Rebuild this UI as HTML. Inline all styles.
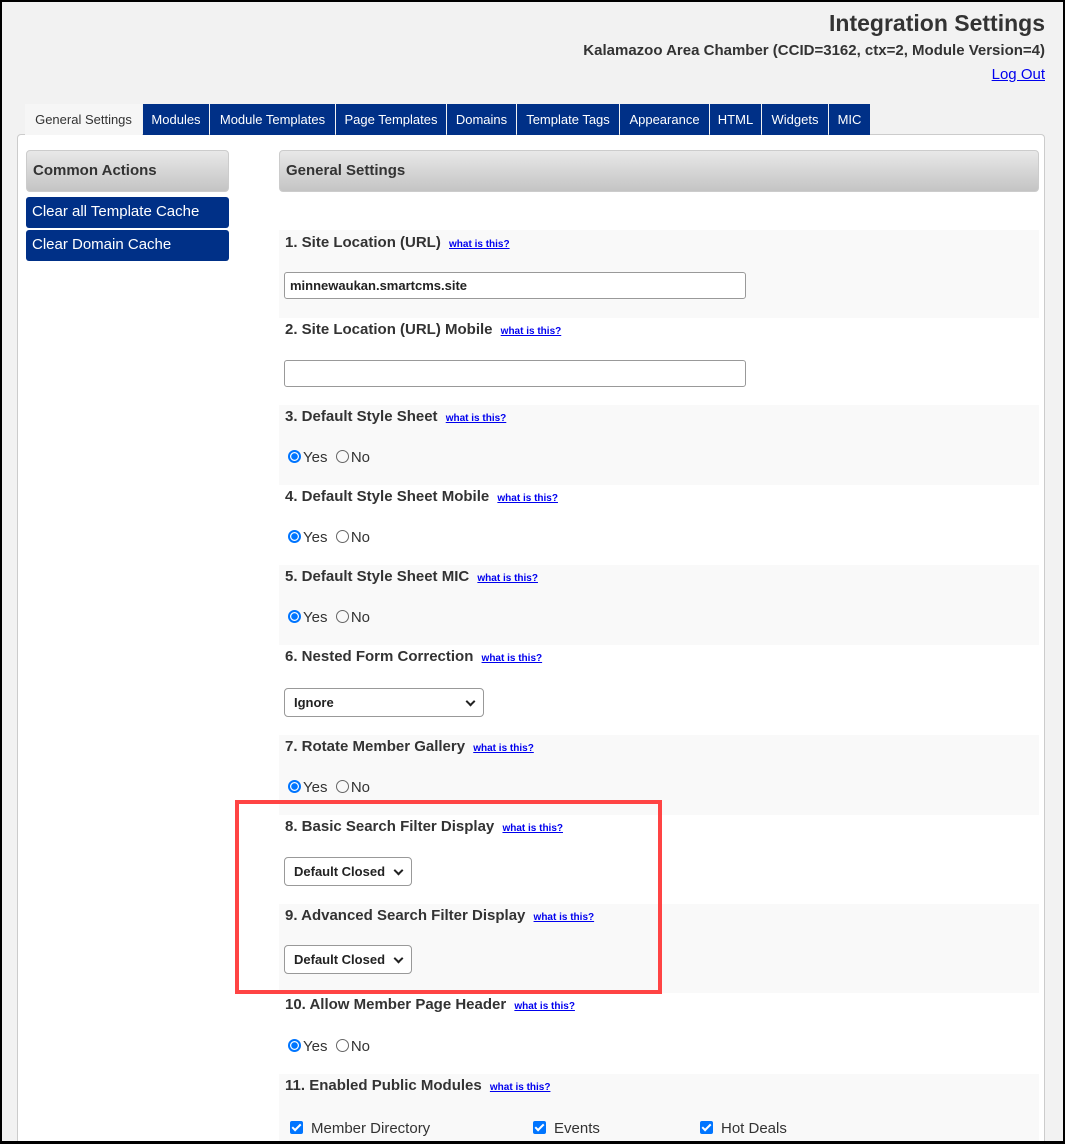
<!DOCTYPE html>
<html style="width:1065px;height:1144px;overflow:hidden"><head><style>
*{box-sizing:border-box;margin:0;padding:0}
body{width:1065px;height:1144px;background:#f2f2f2;font-family:"Liberation Sans","DejaVu Sans",sans-serif;position:relative;overflow:hidden;color:#333}
.frame{position:absolute;left:0;top:0;width:1065px;height:1144px;border:2px solid #000;border-bottom-width:3px;z-index:5;pointer-events:none}
.a{position:absolute;white-space:nowrap}
h1{position:absolute;right:20px;top:10px;font-size:23px;font-weight:bold;color:#333}
.sub{right:20px;top:42px;font-size:15px;font-weight:bold;color:#333}
.lo{right:20px;top:66px;font-size:15px;color:#00e;text-decoration:underline}
.tab{position:absolute;top:104px;background:#003087;color:#fff;font-size:13px;height:31px;line-height:31px;text-align:center;white-space:nowrap}
.tab.on{background:#f6f6f6;color:#333}
.panel{position:absolute;left:17px;top:134px;width:1028px;height:1008px;background:#fff;border:1px solid #ccc;border-bottom:none;border-radius:4px 4px 0 0}
.hd{position:absolute;height:42px;line-height:40px;background:linear-gradient(#e8e8e8,#c4c4c4);border:1px solid #ccc;border-radius:4px;font-weight:bold;font-size:15px;padding-left:6px;color:#333}
.btn{position:absolute;left:26px;width:203px;height:31px;background:#003087;color:#fff;font-size:15px;line-height:30px;padding-left:6px;border-radius:3px}
.row{position:absolute;left:279px;width:760px}
.sh{background:#f9f9f9}
.lb{position:absolute;left:6px;font-size:15px;font-weight:bold;color:#333;white-space:nowrap}
.lb a{font-size:10px;color:#00e;text-decoration:underline;font-weight:bold;margin-left:4px}
.inp{position:absolute;left:5px;width:462px;height:27px;border:1px solid #999;border-radius:3px;font-size:13px;font-weight:bold;padding:5px;color:#222;background:#fff}
.sel{position:absolute;left:5px;height:29px;border:1px solid #999;border-radius:4px;font-size:13px;font-weight:bold;padding:6px 9px;color:#222;background:#fff}
.sel:after{content:"";position:absolute;right:9px;top:9px;width:5px;height:5px;border-right:2px solid #222;border-bottom:2px solid #222;transform:rotate(45deg)}
.rad{position:absolute;left:9px;font-size:15px;color:#333;white-space:nowrap}
.rb{display:inline-block;width:13px;height:13px;border-radius:50%;border:1px solid #666;vertical-align:-1px;margin-right:2px}
.rb.on{border:2px solid #0075ff;background:radial-gradient(#0075ff 3px,#fff 3.5px)}
.cb{display:inline-block;width:13px;height:13px;background:#0075ff;border-radius:2px;vertical-align:-1px;position:relative;margin-right:8px}
.cb:after{content:"";position:absolute;left:4px;top:1px;width:3px;height:7px;border-right:2px solid #fff;border-bottom:2px solid #fff;transform:rotate(45deg)}
.red{position:absolute;left:235px;top:800px;width:427px;height:194px;border:4px solid #f44;z-index:4}
</style></head><body>
<div class="frame"></div>
<h1>Integration Settings</h1>
<div class="a sub">Kalamazoo Area Chamber (CCID=3162, ctx=2, Module Version=4)</div>
<div class="a lo">Log Out</div>
<div class="panel"></div>
<div class="tab on" style="left:25px;width:117px">General Settings</div>
<div class="tab" style="left:143px;width:66px">Modules</div>
<div class="tab" style="left:210px;width:125px">Module Templates</div>
<div class="tab" style="left:336px;width:110px">Page Templates</div>
<div class="tab" style="left:447px;width:69px">Domains</div>
<div class="tab" style="left:517px;width:102px">Template Tags</div>
<div class="tab" style="left:620px;width:89px">Appearance</div>
<div class="tab" style="left:710px;width:51px">HTML</div>
<div class="tab" style="left:762px;width:66px">Widgets</div>
<div class="tab" style="left:829px;width:41px">MIC</div>
<div class="hd" style="left:26px;top:150px;width:203px">Common Actions</div>
<div class="btn" style="top:197px">Clear all Template Cache</div>
<div class="btn" style="top:230px">Clear Domain Cache</div>
<div class="hd" style="left:279px;top:150px;width:760px">General Settings</div>

<div class="row sh" style="top:230px;height:88px"><div class="lb" style="top:4px">1. Site Location (URL) <a>what is this?</a></div><div class="inp" style="top:42px">minnewaukan.smartcms.site</div></div>
<div class="row" style="top:318px;height:87px"><div class="lb" style="top:3px">2. Site Location (URL) Mobile <a>what is this?</a></div><div class="inp" style="top:42px"></div></div>
<div class="row sh" style="top:405px;height:80px"><div class="lb" style="top:3px">3. Default Style Sheet <a>what is this?</a></div><div class="rad" style="top:44px"><span class="rb on"></span>Yes &nbsp;<span class="rb"></span>No</div></div>
<div class="row" style="top:485px;height:80px"><div class="lb" style="top:3px">4. Default Style Sheet Mobile <a>what is this?</a></div><div class="rad" style="top:44px"><span class="rb on"></span>Yes &nbsp;<span class="rb"></span>No</div></div>
<div class="row sh" style="top:565px;height:80px"><div class="lb" style="top:3px">5. Default Style Sheet MIC <a>what is this?</a></div><div class="rad" style="top:44px"><span class="rb on"></span>Yes &nbsp;<span class="rb"></span>No</div></div>
<div class="row" style="top:645px;height:90px"><div class="lb" style="top:3px">6. Nested Form Correction <a>what is this?</a></div><div class="sel" style="top:43px;width:200px">Ignore</div></div>
<div class="row sh" style="top:735px;height:80px"><div class="lb" style="top:3px">7. Rotate Member Gallery <a>what is this?</a></div><div class="rad" style="top:44px"><span class="rb on"></span>Yes &nbsp;<span class="rb"></span>No</div></div>
<div class="row" style="top:815px;height:89px"><div class="lb" style="top:3px">8. Basic Search Filter Display <a>what is this?</a></div><div class="sel" style="top:42px;width:128px">Default Closed</div></div>
<div class="row sh" style="top:904px;height:89px"><div class="lb" style="top:3px">9. Advanced Search Filter Display <a>what is this?</a></div><div class="sel" style="top:41px;width:128px">Default Closed</div></div>
<div class="row" style="top:993px;height:81px"><div class="lb" style="top:3px">10. Allow Member Page Header <a>what is this?</a></div><div class="rad" style="top:45px"><span class="rb on"></span>Yes &nbsp;<span class="rb"></span>No</div></div>
<div class="row sh" style="top:1074px;height:68px"><div class="lb" style="top:3px">11. Enabled Public Modules <a>what is this?</a></div>
<div class="rad" style="top:46px;left:11px"><span class="cb"></span>Member Directory</div>
<div class="rad" style="top:46px;left:254px"><span class="cb"></span>Events</div>
<div class="rad" style="top:46px;left:421px"><span class="cb"></span>Hot Deals</div></div>
<div class="red"></div>
</body></html>
